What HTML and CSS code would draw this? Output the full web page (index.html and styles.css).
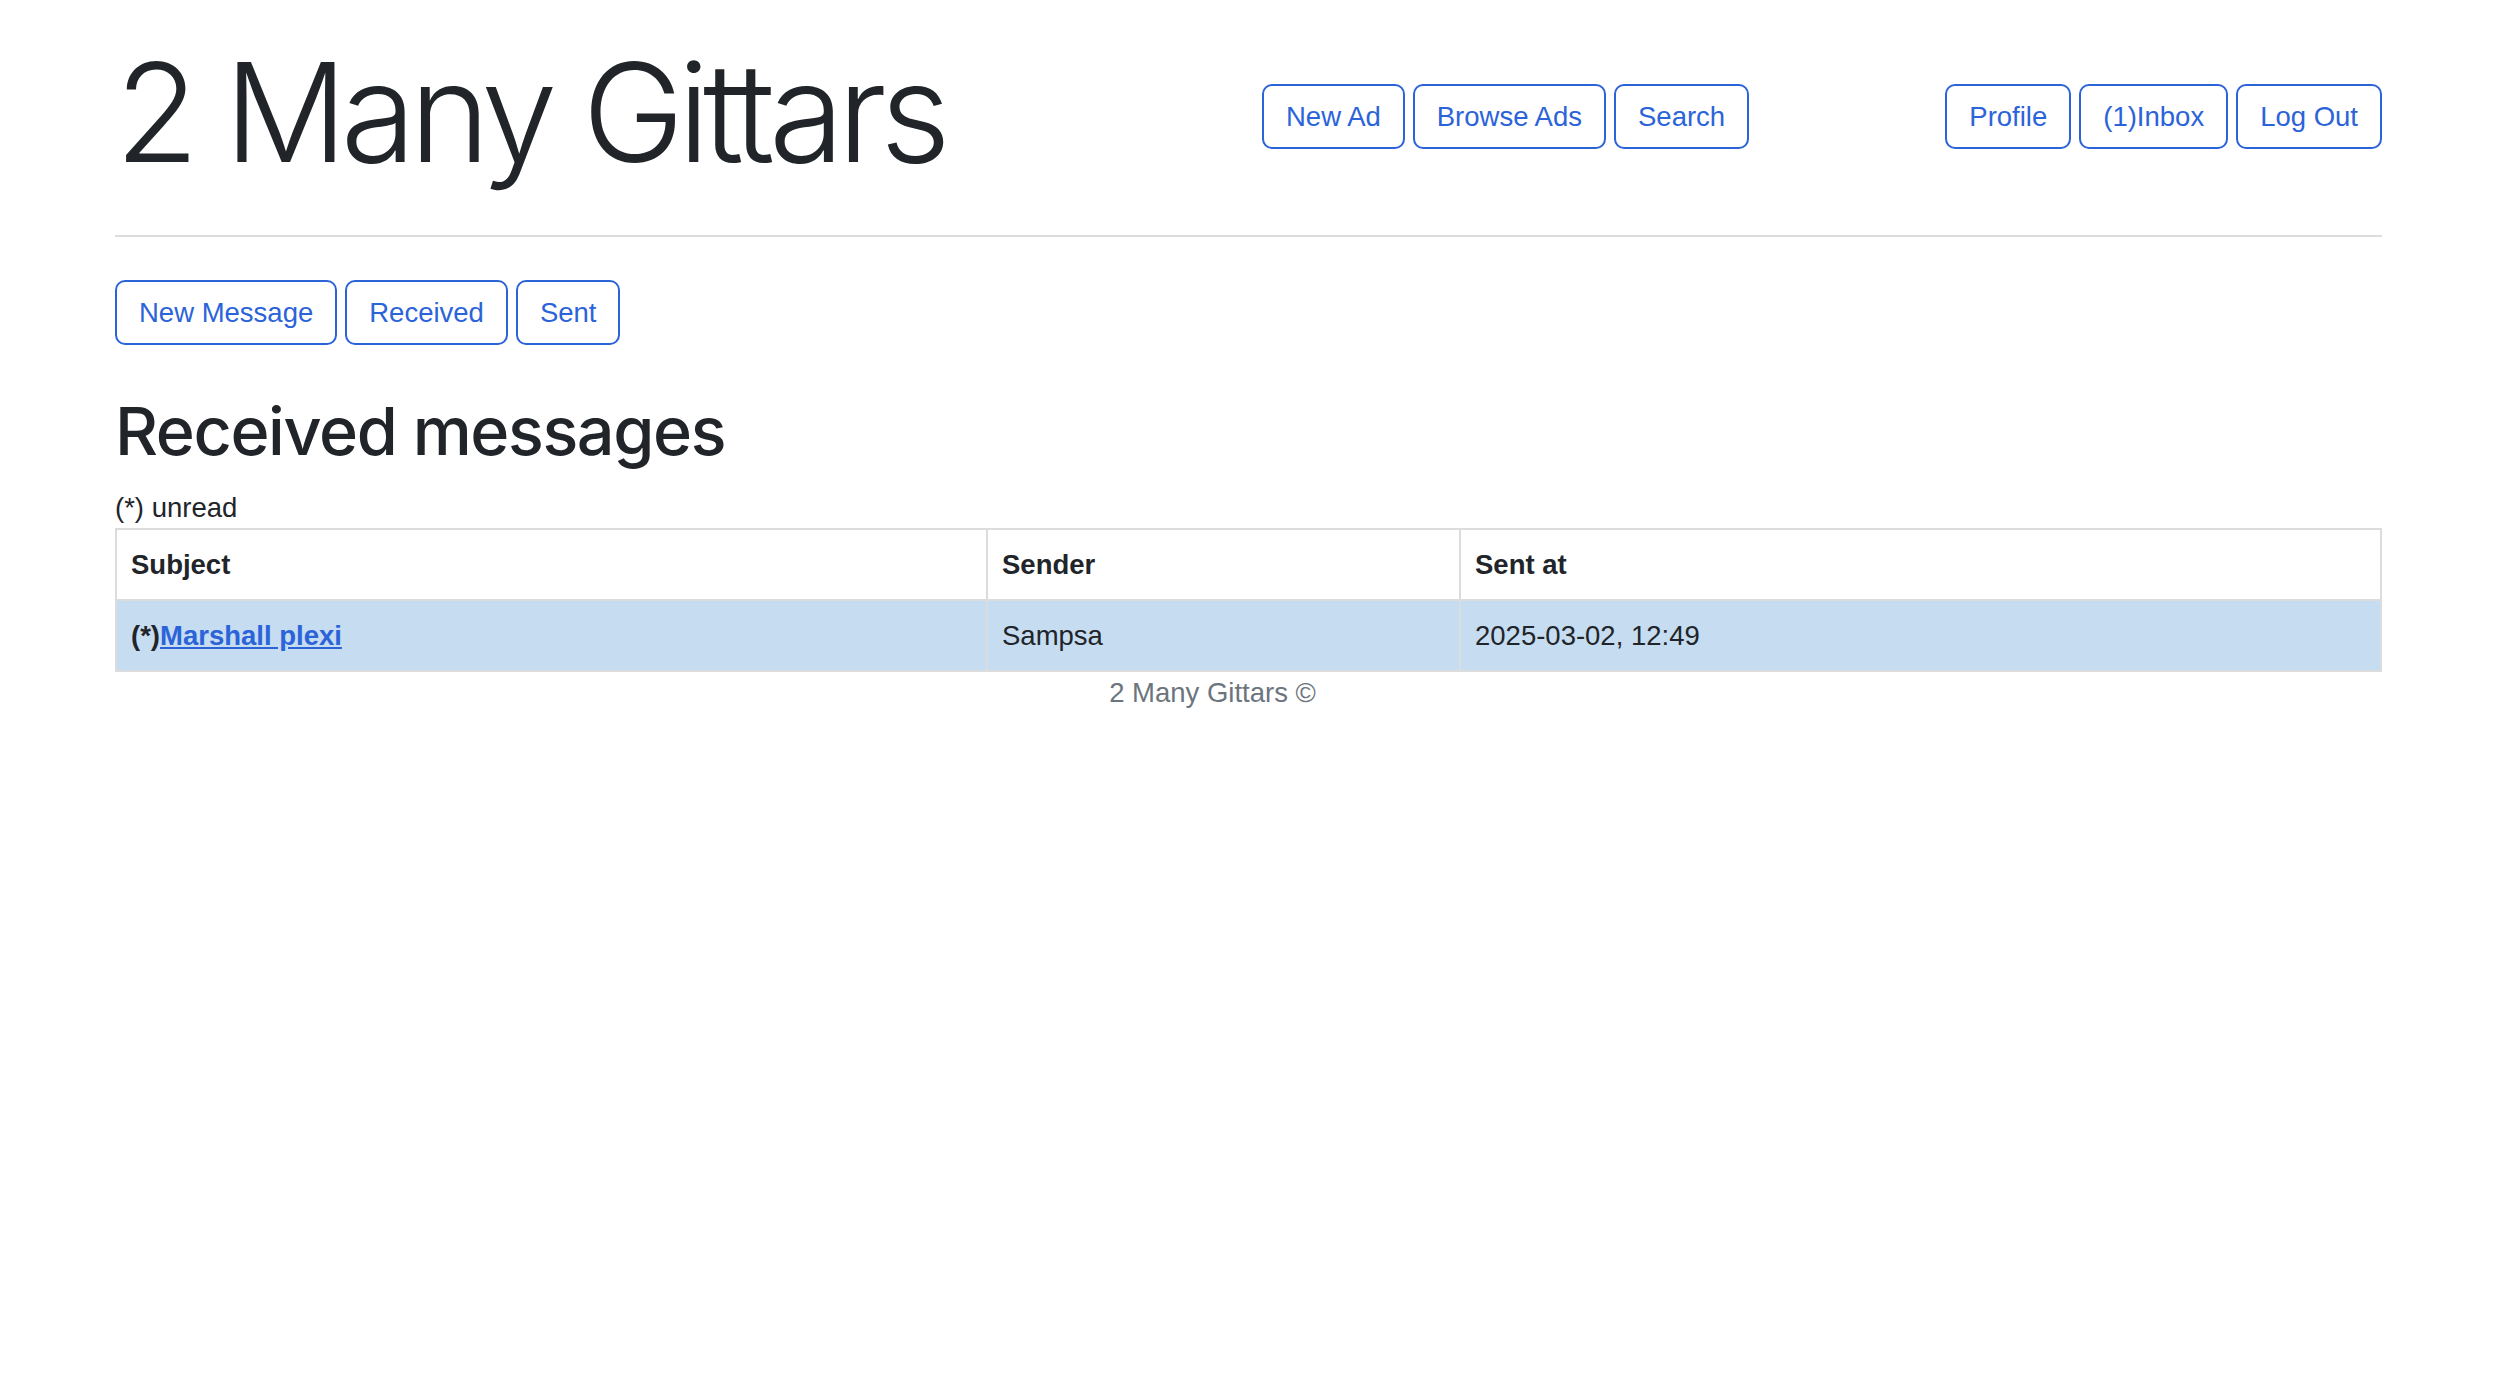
FILE: index.html
```html
<!DOCTYPE html>
<html lang="en">
<head>
<meta charset="utf-8">
<title>2 Many Gittars - Inbox</title>
<link rel="stylesheet" href="styles.css">
</head>
<body>
<div class="page">
  <header class="site-header">
    <h1 class="brand">2 Many Gittars</h1>
    <nav class="nav-group">
      <a class="btn" href="#">New Ad</a>
      <a class="btn" href="#">Browse Ads</a>
      <a class="btn" href="#">Search</a>
    </nav>
    <nav class="nav-group nav-user">
      <a class="btn" href="#">Profile</a>
      <a class="btn" href="#">(1)Inbox</a>
      <a class="btn" href="#">Log Out</a>
    </nav>
  </header>
  <hr class="divider">
  <div class="subnav">
    <a class="btn" href="#">New Message</a>
    <a class="btn" href="#">Received</a>
    <a class="btn" href="#">Sent</a>
  </div>
  <h2 class="page-title">Received messages</h2>
  <p class="legend">(*) unread</p>
  <table class="messages">
    <colgroup>
      <col class="col-subject">
      <col class="col-sender">
      <col class="col-date">
    </colgroup>
    <thead>
      <tr><th>Subject</th><th>Sender</th><th>Sent at</th></tr>
    </thead>
    <tbody>
      <tr class="row-unread">
        <td><strong>(*)</strong><a class="msg-link" href="#">Marshall plexi</a></td>
        <td>Sampsa</td>
        <td>2025-03-02, 12:49</td>
      </tr>
    </tbody>
  </table>
  <footer class="site-footer">2 Many Gittars ©</footer>
</div>
</body>
</html>
```
FILE: styles.css
```css
html, body {
  margin: 0;
  padding: 0;
  background: #ffffff;
}

body {
  font-family: "Liberation Sans", Arial, sans-serif;
  font-size: 27.5px;
  line-height: 41.25px;
  color: #212529;
}

.page {
  margin-left: 115px;
  width: 2267px;
}

.site-header {
  display: flex;
  align-items: flex-start;
  padding-top: 30px;
}

.brand {
  flex: 0 0 1147px;
  margin: 0;
  font-family: Inter, "Liberation Sans", sans-serif;
  font-weight: 350;
  font-size: 137px;
  line-height: 164px;
  letter-spacing: -6.7px;
  color: #212529;
}

.nav-group {
  display: flex;
  gap: 8px;
  margin-top: 54px;
}

.nav-user {
  margin-left: auto;
}

.btn {
  display: inline-block;
  border: 2px solid #2b63d9;
  border-radius: 10px;
  padding: 9.75px 22px;
  font-size: 27.5px;
  line-height: 41.25px;
  color: #2b63d9;
  text-decoration: none;
  background: transparent;
  white-space: nowrap;
}

.divider {
  margin: 41px 0 0;
  height: 0;
  border: 0;
  border-top: 2px solid #dddddd;
}

.subnav {
  display: flex;
  gap: 8px;
  margin-top: 43px;
}

.page-title {
  margin: 45px 0 14.5px;
  font-family: Inter, "Liberation Sans", sans-serif;
  font-weight: 500;
  font-size: 66.5px;
  line-height: 82.4px;
  letter-spacing: -1.4px;
  color: #212529;
}

.legend {
  margin: 0;
}

.messages {
  width: 100%;
  border-collapse: collapse;
  table-layout: fixed;
  border: 2px solid #dadcde;
}

.col-subject {
  width: 871px;
}

.col-sender {
  width: 473px;
}

.messages th,
.messages td {
  border: 2px solid #dadcde;
  padding: 14px 14px;
  text-align: left;
  vertical-align: middle;
}

.messages th {
  font-weight: 700;
}

.row-unread td {
  background: #c6dcf1;
}

.msg-link {
  color: #2b63d9;
  font-weight: 700;
  text-decoration: underline;
}

.site-footer {
  text-align: center;
  color: #6c757d;
  padding-right: 72px;
}
```
